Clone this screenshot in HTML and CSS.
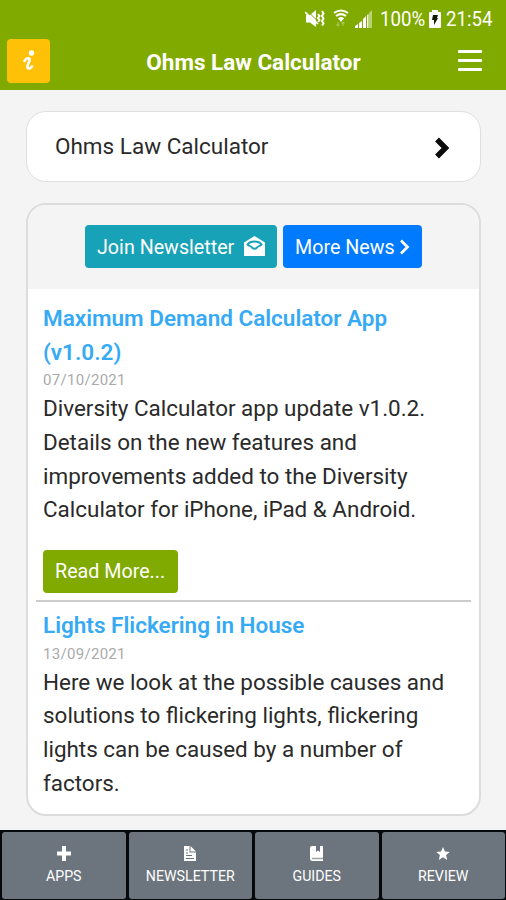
FILE: index.html
```html
<!DOCTYPE html>
<html lang="en">
<head>
<meta charset="utf-8">
<title>Ohms Law Calculator</title>
<link rel="stylesheet" href="styles.css">
</head>
<body>
<header class="header">
  <div class="status">
    <svg class="mute" width="20" height="18" viewBox="0 0 20 18"><path fill="#fff" d="M1 5h4L11 0v17L5 12.500H1z"/><path d="M2 .5l12 12" stroke="#80aa00" stroke-width="1"/><path d="M0 2l13 12" fill="none" stroke="#fff" stroke-width="1.700"/><path d="M13 4l1.500 2-1.500 2 1.500 2-1.500 2M17 1l1.500 2.500L17 6l1.500 2.500L17 11l1.500 2.500-1.500 2" fill="none" stroke="#fff" stroke-width="2"/></svg>
    <svg class="wifi" width="16" height="19" viewBox="0 0 16 19"><path d="M1 4Q8-1 15 4M3 7Q8 3.200 13 7M5.500 10Q8 8 10.500 10" fill="none" stroke="#fff" stroke-width="2"/><path d="M6 10h4l-2 3z" fill="#fff"/><path d="M5 13v4M3.500 15.500L5 17l1.500-1.500M10 17v-4M8.500 14.500L10 13l1.500 1.500" fill="none" stroke="#a8c552" stroke-width="1.200"/></svg>
    <svg class="signal" width="18" height="18" viewBox="0 0 18 18"><path d="M0 18v-2l3-2v4zM4 18v-5l3-2v7zM8 18V9l3-3v12z" fill="#fff"/><path d="M12 18V5l1.500-1v14z" fill="#fff"/><path d="M14 18V3l3-3v18z" fill="#b8d172"/></svg>
    <span class="percent">100%</span>
    <svg class="battery" width="12" height="18" viewBox="0 0 12 18"><path d="M3 0h6v2h2q1 0 1 1v14q0 1-1 1H1q-1 0-1-1V3q0-1 1-1h2z" fill="#fff"/><path d="M4 5h5L8 8h1l-4 7V10H3z" fill="#151b00"/></svg>
    <span class="time">21:54</span>
  </div>
  <div class="titlebar">
    <div class="info"><svg width="12" height="22" viewBox="0 0 12 22"><circle cx="8.500" cy="3" r="2.700" fill="#fff"/><path d="M1.500 11Q3.500 7.500 6 8.500C8.500 9.500 3.500 15 4.500 17.500Q6 20 9 16.500" fill="none" stroke="#fff" stroke-width="2.600" stroke-linecap="round"/></svg></div>
    <h1 class="title">Ohms Law Calculator</h1>
    <div class="menu"><i></i><i></i><i></i></div>
  </div>
</header>
<main class="main">
  <a class="entry"><span class="entry-label">Ohms Law Calculator</span>
    <svg width="16" height="22" viewBox="0 0 16 22"><path d="M3 2.500l8.500 8.500L3 19.500" fill="none" stroke="#0b0b0b" stroke-width="5.400"/></svg></a>
  <section class="news">
    <div class="actions">
      <a class="btn join"><span>Join Newsletter</span><svg width="21" height="20" viewBox="0 0 21 20"><path d="M0 6.500L10.500 0 21 6.500V20H0z" fill="#fff"/><path d="M3.500 8.500C6 4.500 15 4.500 17.500 8.500C16 10 14 10.500 13 11.500Q10.500 14 8 11.500C7 10.500 5 10 3.500 8.500z" fill="#fff" stroke="#17a2b8" stroke-width="1.800"/></svg></a>
      <a class="btn more"><span>More News</span><svg width="11" height="16" viewBox="0 0 11 16"><path d="M2 1.500L8.500 8 2 14.500" fill="none" stroke="#fff" stroke-width="2.700"/></svg></a>
    </div>
    <article class="post">
      <h2 class="post-title">Maximum Demand Calculator App<br>(v1.0.2)</h2>
      <time class="date">07/10/2021</time>
      <p class="text">Diversity Calculator app update v1.0.2.<br>Details on the new features and<br>improvements added to the Diversity<br>Calculator for iPhone, iPad &amp; Android.</p>
      <a class="btn read"><span>Read More...</span></a>
    </article>
    <article class="post second">
      <h2 class="post-title">Lights Flickering in House</h2>
      <time class="date">13/09/2021</time>
      <p class="text">Here we look at the possible causes and<br>solutions to flickering lights, flickering<br>lights can be caused by a number of<br>factors.</p>
    </article>
  </section>
</main>
<nav class="tabs">
  <a class="tab"><svg width="14" height="15" viewBox="0 0 14 15"><path d="M5 0h4v5.500h5v4H9V15H5V9.500H0v-4h5z" fill="#fff"/></svg><span>APPS</span></a>
  <a class="tab"><svg width="14" height="15" viewBox="0 0 14 15"><path d="M1 0h5.500v6.500H13V15H1zM7.500 0L13 5.500H7.500z" fill="#fff"/><path d="M3 4h2M3 7h2M3 9.500h6M3 12.500h8" stroke="#6c757d" stroke-width="1"/></svg><span>NEWSLETTER</span></a>
  <a class="tab"><svg width="14" height="15" viewBox="0 0 14 15"><path d="M2 0h4v6l2-1.500L10 6V0h3v15H2.500Q0 15 0 12.500V2Q0 0 2 0z" fill="#fff"/><path d="M2 12.500h11" stroke="#9ba2a8" stroke-width="1.500"/></svg><span>GUIDES</span></a>
  <a class="tab"><svg width="14" height="15" viewBox="0 0 14 15"><path d="M7 1l1.900 4.500 4.900.4-3.700 3.200 1.100 4.800L7 11.300l-4.200 2.600 1.100-4.800L.2 5.900l4.900-.4z" fill="#fff"/></svg><span>REVIEW</span></a>
</nav>
</body>
</html>
```
FILE: styles.css
```css
* { box-sizing: border-box; }
body { margin: 0; width: 506px; height: 900px; display: flex; flex-direction: column; background: #f4f4f4; font-family: Roboto, sans-serif; color: #2a2a2a; overflow: hidden; }
svg { display: block; flex: none; }
.header { height: 90px; background: #80aa00; color: #fff; flex: none; }
.status { height: 37px; display: flex; align-items: center; justify-content: flex-end; padding-right: 14px; font-size: 21px; }
.status span { white-space: nowrap; transform: scaleX(.89); transform-origin: left; }
.mute { margin-right: 8px; }
.wifi { margin-right: 6px; }
.signal { margin-right: 7px; }
.percent { width: 44px; }
.battery { margin: 0 5px; }
.time { width: 46px; }
.titlebar { display: flex; height: 48px; align-items: center; padding: 0 24px 0 7px; }
.info { width: 43px; height: 44px; border-radius: 4px; background: #ffc107; display: flex; align-items: center; justify-content: center; }
.title { flex: 1; margin: 2px 0 0 -1px; text-align: center; font-size: 22.500px; line-height: 30px; font-weight: 700; }
.menu { width: 24px; display: flex; flex-direction: column; gap: 6px; margin-top: -2px; }
.menu i { height: 3px; background: #fff; border-radius: 1px; }
.main { flex: 1; padding: 21px 25px 0 26px; }
.entry { height: 71px; display: flex; align-items: center; justify-content: space-between; padding: 0 30px 0 28px; background: #fff; border: 1.500px solid #dfdfdf; border-radius: 20px; font-size: 22.500px; }
.entry-label { margin-top: -2px; }
.entry svg { margin-top: 2px; }
.news { margin-top: 21px; height: 613px; border: 2px solid #dcdcdc; border-radius: 20px; background: #fff; overflow: hidden; }
.actions { height: 84px; background: #f4f4f4; display: flex; justify-content: center; align-items: center; gap: 6px; padding-bottom: 1px; }
.btn { height: 43px; border-radius: 4px; display: flex; align-items: center; color: #fff; padding: 0 12px; justify-content: space-between; font-size: 19.700px; white-space: nowrap; }
.join { width: 192px; background: #17a2b8; }
.join span, .more span { padding-top: 2px; }
.join svg { margin-top: -2px; }
.more { width: 139px; background: #007bff; }
.post { margin: 0 8px; padding: 13px 7px 0; height: 313px; border-bottom: 2px solid #ccc; }
.post-title { margin: 0; font-size: 22.500px; line-height: 33.600px; font-weight: 600; color: #36aaf5; white-space: nowrap; }
.date { display: block; font-size: 15px; line-height: 23px; color: #aaa; letter-spacing: .3px; }
.text { margin: 0; font-size: 22.450px; line-height: 33.700px; white-space: nowrap; }
.read { width: 135px; background: #80aa00; margin-top: 23px; }
.second { border: 0; padding-top: 7px; }
.tabs { height: 70px; background: #05090c; display: grid; grid-template-columns: repeat(4, 1fr); gap: 3px; padding: 2px 1px 1px 2px; flex: none; }
.tab { background: #6c757d; border-radius: 3px; display: flex; flex-direction: column; align-items: center; padding-top: 14px; gap: 5px; color: #fff; font-size: 14.200px; line-height: 20px; }
```
